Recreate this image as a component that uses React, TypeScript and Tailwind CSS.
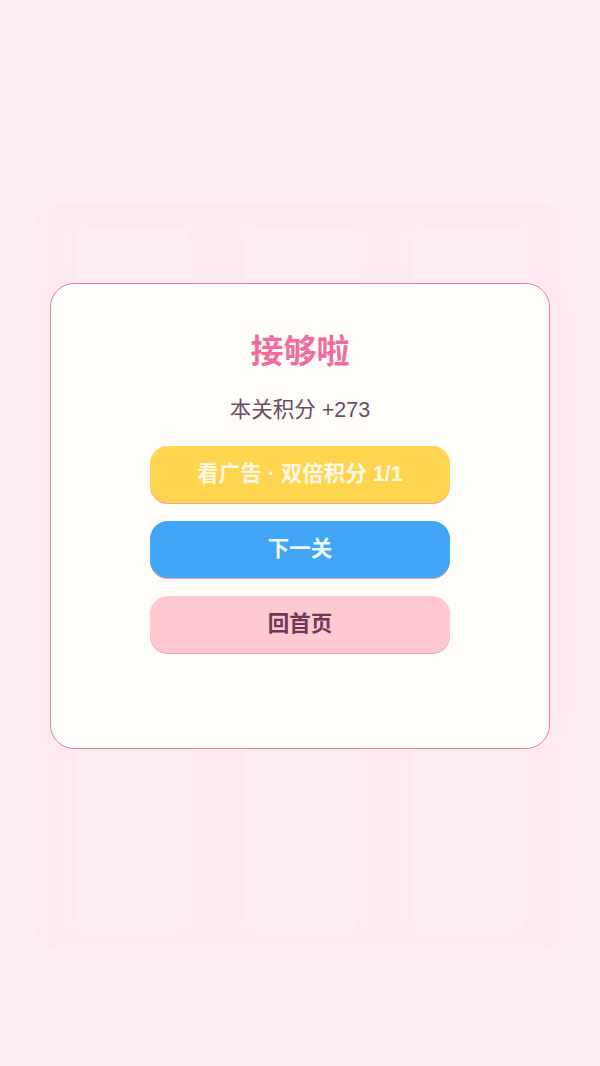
import React from 'react';

const FONT = '"Liberation Sans", "Noto Sans CJK SC", sans-serif';

function Board() {
  return (
    <div className="absolute left-[34px] top-[203px] flex h-[747px] w-[534px] justify-between rounded-[28px] bg-[#ffeaf4] px-[41px] pt-[25px] pb-[20px]">
      {[0, 1, 2].map((i) => (
        <div key={i} className="h-full w-[115px] rounded-[14px] bg-[#ffedf6]" />
      ))}
    </div>
  );
}

export default function App() {
  return (
    <div
      className="relative h-[1066px] w-[600px] overflow-hidden bg-[#ffedf5]"
      style={{ fontFamily: FONT }}
    >
      <Board />

      {/* Result dialog */}
      <div className="absolute left-[50px] top-[283px] flex h-[466px] w-[500px] flex-col items-center rounded-[24px] border-[1.5px] border-[#e97ca4] bg-[#fffdf9] pt-[45px]">
        <h1 className="text-[33px] leading-[46px] font-bold text-[#f06c9b]">接够啦</h1>
        <p className="mt-[20px] text-[21.5px] leading-[30px] text-[#6e4b61]">本关积分 +273</p>

        <div className="mt-[21px] flex flex-col gap-[18px]">
          <button className="h-[57px] w-[300px] rounded-[18px] bg-[#ffd54f] text-[21.5px] font-bold text-[#fff8e6] shadow-[0_1px_0_#f29a9a]">
            看广告 · 双倍积分 1/1
          </button>
          <button className="h-[57px] w-[300px] rounded-[18px] bg-[#42a5f5] text-[21.5px] font-bold text-[#eef7ff] shadow-[0_1px_0_#e8a0b8]">
            下一关
          </button>
          <button className="h-[57px] w-[300px] rounded-[18px] bg-[#ffc9d2] text-[21.5px] font-bold text-[#6b3a55] shadow-[0_1px_0_#e8a0b8]">
            回首页
          </button>
        </div>
      </div>
    </div>
  );
}
